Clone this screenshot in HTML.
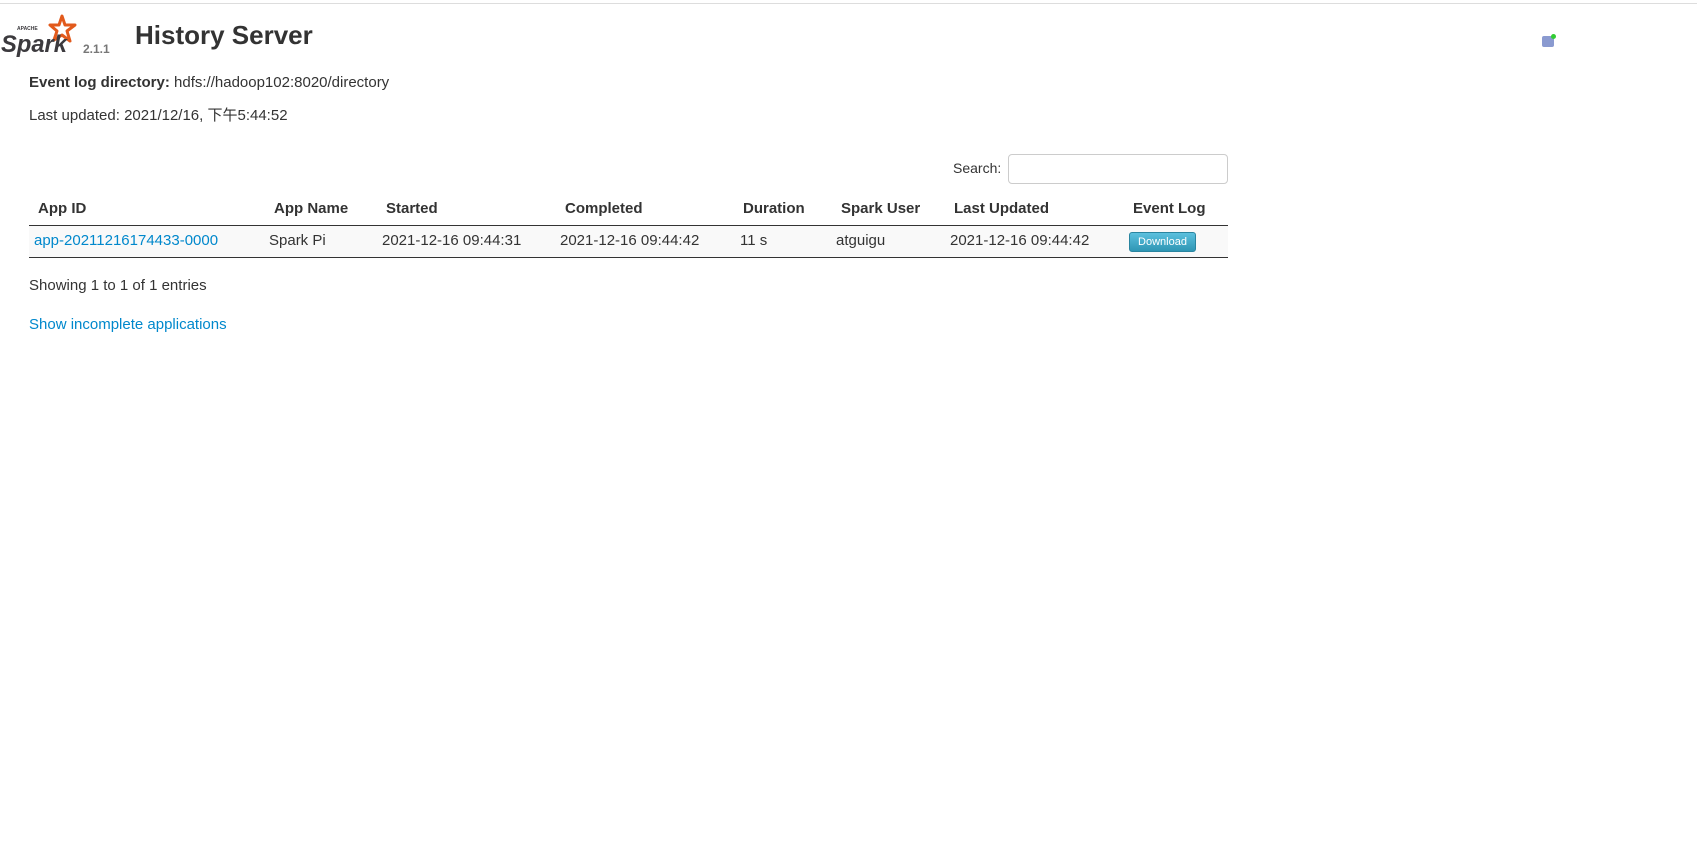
<!DOCTYPE html>
<html><head><meta charset="utf-8"><style>
body{margin:0;background:#fff;font-family:"Liberation Sans","Noto Sans CJK SC",sans-serif;color:#333;font-size:15px;width:1697px;height:853px;position:relative;overflow:hidden}
.a{position:absolute;white-space:nowrap}
a{color:#0088cc;text-decoration:none}
</style></head><body>
<div class="a" style="left:0;top:3px;width:1697px;height:1px;background:#ddd"></div>
<svg class="a" style="left:0;top:14px" width="80" height="44" viewBox="0 0 80 44">
<path d="M62 2 L65 11 L75 11 L67 17 L70 27 L62 21 L54 26 L57 17 L50 11 L59 11 Z" fill="none" stroke="#e25a1c" stroke-width="3" stroke-linejoin="round"/>
<text x="17" y="16" font-size="5" fill="#3c3a3e" font-family="Liberation Sans" font-weight="bold">APACHE</text>
<text x="1" y="38" font-size="24" font-style="italic" font-weight="bold" fill="#3c3a3e" font-family="Liberation Sans" textLength="66" lengthAdjust="spacingAndGlyphs">Spark</text>
</svg>
<div class="a" style="left:83px;top:42px;font-size:12px;font-weight:bold;color:#777">2.1.1</div>
<div class="a" style="left:135px;top:20px;font-size:26px;font-weight:bold;color:#333">History Server</div>
<div class="a" style="left:1542px;top:36px;width:12px;height:11px;background:#8a9ad0;border-radius:2px"></div>
<div class="a" style="left:1551px;top:34px;width:5px;height:5px;background:#3c3;border-radius:50%"></div>
<div class="a" style="left:29px;top:74px"><b>Event log directory:</b> hdfs://hadoop102:8020/directory</div>
<div class="a" style="left:29px;top:104px">Last updated: 2021/12/16, 下午5:44:52</div>
<div class="a" style="left:953px;top:160px;font-size:14px">Search:</div>
<div class="a" style="left:1008px;top:154px;width:218px;height:28px;border:1px solid #ccc;border-radius:4px"></div>
<div class="a" style="left:29px;top:225px;width:1199px;height:1px;background:#333"></div>
<div class="a" style="left:29px;top:226px;width:1199px;height:31px;background:#f9f9f9;border-bottom:1px solid #333"></div>
<div class="a" style="top:200px;font-weight:bold;font-size:15px;left:0">
<span class="a" style="left:38px">App ID</span><span class="a" style="left:274px">App Name</span><span class="a" style="left:386px">Started</span><span class="a" style="left:565px">Completed</span><span class="a" style="left:743px">Duration</span><span class="a" style="left:841px">Spark User</span><span class="a" style="left:954px">Last Updated</span><span class="a" style="left:1133px">Event Log</span></div>
<div class="a" style="top:232px;font-size:15px;left:0">
<a class="a" style="left:34px">app-20211216174433-0000</a><span class="a" style="left:269px">Spark Pi</span><span class="a" style="left:382px">2021-12-16 09:44:31</span><span class="a" style="left:560px">2021-12-16 09:44:42</span><span class="a" style="left:740px">11 s</span><span class="a" style="left:836px">atguigu</span><span class="a" style="left:950px">2021-12-16 09:44:42</span></div>
<div class="a" style="left:1129px;top:232px;width:67px;height:20px;background:linear-gradient(#5bc0de,#2f96b4);border:1px solid #2a85a0;border-radius:3px;box-sizing:border-box;color:#fff;font-size:11px;text-align:center;line-height:18px">Download</div>
<div class="a" style="left:29px;top:277px;font-size:15px">Showing 1 to 1 of 1 entries</div>
<a class="a" style="left:29px;top:316px;font-size:15px">Show incomplete applications</a>
</body></html>
